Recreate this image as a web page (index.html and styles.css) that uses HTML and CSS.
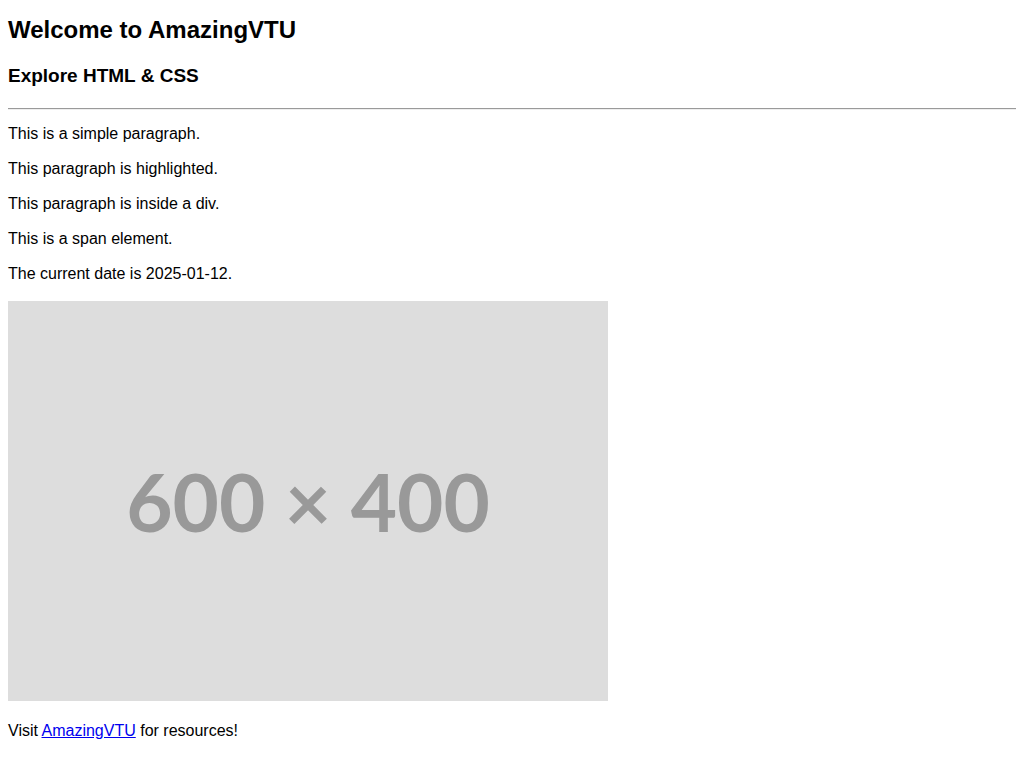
FILE: index.html
```html
<!DOCTYPE html>
<html lang="en">
<head>
<meta charset="utf-8">
<title>AmazingVTU</title>
<link rel="stylesheet" href="styles.css">
</head>
<body class="page">
  <h1 class="title">Welcome to AmazingVTU</h1>
  <h2 class="subtitle">Explore HTML &amp; CSS</h2>
  <hr class="rule">
  <p class="text">This is a simple paragraph.</p>
  <p class="text highlight">This paragraph is highlighted.</p>
  <div class="box">
    <p class="text">This paragraph is inside a div.</p>
  </div>
  <p class="text"><span class="span-el">This is a span element.</span></p>
  <p class="text">The current date is 2025-01-12.</p>
  <div class="placeholder"><span class="placeholder-label">600 × 400</span></div>
  <p class="text">Visit <a class="link" href="#">AmazingVTU</a> for resources!</p>
</body>
</html>
```

FILE: styles.css
```css
html {
  background: #ffffff;
}
.page {
  margin: 0;
  padding: 8px;
  display: flex;
  flex-direction: column;
  font-family: "Liberation Sans", Arial, sans-serif;
  font-size: 16px;
  color: #000000;
}
.title {
  font-size: 24px;
  font-weight: bold;
  margin: 8px 0 21px;
}
.subtitle {
  font-size: 19px;
  font-weight: bold;
  margin: 0 0 21px;
}
.rule {
  margin: 0 0 14px;
  border: none;
  border-top: 1px solid #9a9a9a;
  border-bottom: 1px solid #eeeeee;
  height: 0;
  width: 100%;
}
.text {
  margin: 0 0 16px;
  line-height: 19px;
}
.box {
  display: flex;
  flex-direction: column;
}
.placeholder {
  width: 600px;
  height: 400px;
  background: #dddddd;
  display: flex;
  align-items: center;
  justify-content: center;
  margin: 1.5px 0 20.5px;
}
.placeholder-label {
  font-family: Lato, "Open Sans", sans-serif;
  font-weight: bold;
  font-size: 80px;
  color: #999999;
}
.link {
  color: #0000ee;
  text-decoration: underline;
}
```
